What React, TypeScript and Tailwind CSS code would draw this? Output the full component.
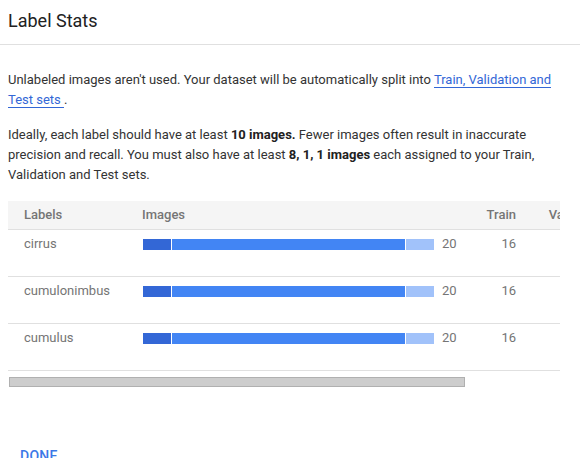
const rows = [
  { label: "cirrus", total: 20, train: 16, validation: 2, test: 2 },
  { label: "cumulonimbus", total: 20, train: 16, validation: 2, test: 2 },
  { label: "cumulus", total: 20, train: 16, validation: 2, test: 2 },
];

function SplitBar() {
  return (
    <div className="flex h-[11px] w-[291px] gap-px">
      <div className="w-[28px] bg-[#3367d6]" />
      <div className="w-[233px] bg-[#4285f4]" />
      <div className="w-[28px] bg-[#a1c2fa]" />
    </div>
  );
}

export default function App() {
  return (
    <div className="h-[458px] w-[580px] overflow-hidden bg-white font-['Roboto',sans-serif] text-[13px] leading-5 text-[#333]">
      <div className="flex h-[45px] items-center border-b border-[#e0e0e0] px-2 pb-[3px] text-[18px] text-[#212121]">
        Label Stats
      </div>

      <div className="px-2 pt-[25px]">
        <p>
          Unlabeled images aren't used. Your dataset will be automatically split into{" "}
          <a className="border-b border-[#3367d6] text-[#3367d6]" href="#">
            Train, Validation and Test sets{" "}
          </a>
          .
        </p>
        <p className="mt-[15px]">
          Ideally, each label should have at least <b className="font-bold text-[#212121]">10 images.</b> Fewer
          images often result in inaccurate precision and recall. You must also have at least{" "}
          <b className="font-bold text-[#212121]">8, 1, 1 images</b> each assigned to your Train, Validation and
          Test sets.
        </p>

        <div className="mt-[16px] w-[552px] overflow-hidden">
          <div className="w-[700px] text-[#757575]">
            <div className="flex h-[29px] items-center border-b border-[#e0e0e0] bg-[#f5f5f5] font-medium">
              <div className="w-[134px] pl-4">Labels</div>
              <div className="w-[328px]">Images</div>
              <div className="w-[46px] text-right">Train</div>
              <div className="w-[91px] pl-8 text-right">Validation</div>
              <div className="w-[99px] pl-8 text-right">Test</div>
            </div>
            {rows.map((r) => (
              <div key={r.label} className="flex h-[47px] items-start border-b border-[#e0e0e0] pt-[4px]">
                <div className="w-[134px] pl-4">{r.label}</div>
                <div className="flex w-[328px] items-center pl-px">
                  <SplitBar />
                  <span className="ml-2">{r.total}</span>
                </div>
                <div className="w-[46px] text-right">{r.train}</div>
                <div className="w-[91px] pl-8 text-right">{r.validation}</div>
                <div className="w-[99px] pl-8 text-right">{r.test}</div>
              </div>
            ))}
          </div>
        </div>

        <div className="mt-[6px] h-[10px] w-[552px]">
          <div className="ml-px h-[10px] w-[456px] border border-[#b0b0b0] bg-[#cdcdcd]" />
        </div>

        <div className="mt-[59px] px-3">
          <button className="text-[14px] font-medium uppercase tracking-[0.02em] text-[#3b78e7]">Done</button>
        </div>
      </div>
    </div>
  );
}
